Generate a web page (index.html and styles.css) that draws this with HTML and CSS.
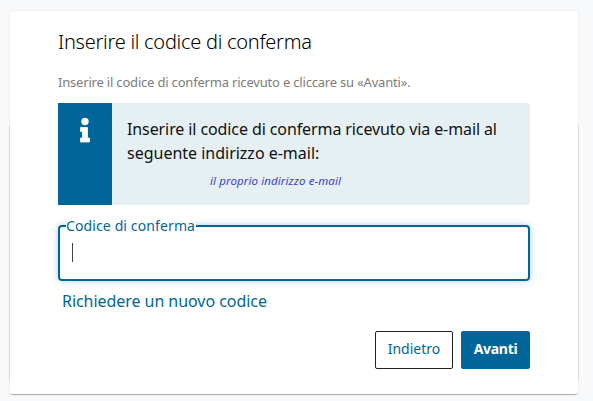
FILE: index.html
```html
<!DOCTYPE html>
<html lang="it">
<head>
<meta charset="utf-8">
<title>Inserire il codice di conferma</title>
<link rel="stylesheet" href="styles.css">
</head>
<body>
<main class="card">
  <h1 class="title"><span>Inserire il codice di conferma</span></h1>
  <p class="lead"><span>Inserire il codice di conferma ricevuto e cliccare su «Avanti».</span></p>
  <section class="notice">
    <div class="notice-icon">
      <svg width="12" height="26" viewBox="0 0 12 26"><circle cx="6" cy="4.500" r="3.700" fill="#fff"/><path d="M1.500 10.500h7v10.500h2v4h-9v-4h2v-6.500h-2z" fill="#fff" stroke="#fff" stroke-width=".8" stroke-linejoin="round"/></svg>
    </div>
    <div class="notice-body">
      <p class="message"><span class="line-one">Inserire il codice di conferma ricevuto via e-mail al</span><br><span class="line-two">seguente indirizzo e-mail:</span></p>
      <p class="address">il proprio indirizzo e-mail</p>
    </div>
  </section>
  <form class="form">
    <div class="field">
      <label class="label">Codice di conferma</label>
      <span class="caret"></span>
    </div>
    <a class="link">Richiedere un nuovo codice</a>
    <div class="actions">
      <button type="button" class="btn">Indietro</button>
      <button type="button" class="btn primary">Avanti</button>
    </div>
  </form>
</main>
</body>
</html>
```
FILE: styles.css
```css
* { box-sizing: border-box; }
body {
  margin: 0;
  padding: 11px 15px 6px 10px;
  height: 401px;
  background: #f7f9fb;
  font-family: "Noto Sans", "Open Sans", sans-serif;
  overflow: hidden;
}
.card {
  position: relative;
  height: 384px;
  padding: 17px 48px 0;
  background: #fff;
  border-radius: 3px;
  box-shadow: 0 0 3px rgba(0, 0, 0, .08);
  border-bottom: 1px solid #adadad;
}
.card::before {
  content: "";
  position: absolute;
  inset: 115px -1px 14px;
  border: solid #d8dadc;
  border-width: 0 1px;
}
.title {
  margin: 0;
  font-size: 20px;
  line-height: 27px;
  font-weight: 300;
  letter-spacing: -.27px;
  color: #000;
  white-space: nowrap;
}
.lead {
  margin: 17px 0 0;
  font-size: 13px;
  line-height: 20px;
  font-weight: 400;
  letter-spacing: -.19px;
  color: #7c7c7c;
  white-space: nowrap;
}
.notice {
  display: flex;
  height: 102px;
  margin-top: 11px;
  background: #e5eff4;
  border-radius: 0 4px 4px 0;
  overflow: hidden;
}
.notice-icon {
  width: 54px;
  padding: 14px 0 0 21px;
  background: #069;
}
.notice-body { padding: 14px 0 0 15px; white-space: nowrap; }
.message { margin: 0; font-size: 16px; line-height: 24px; color: #111; }
.line-one { letter-spacing: -.1px; }
.line-two { letter-spacing: -.01px; }
.address {
  margin: 8px 0 0 83px;
  font-size: 11.5px;
  line-height: 16px;
  font-style: italic;
  letter-spacing: .1px;
  color: #4040cc;
}
.field {
  position: relative;
  height: 56px;
  margin-top: 20px;
  padding: 16px 12px;
  border: 2px solid #069;
  border-radius: 4px;
  box-shadow: 0 0 6px rgba(0, 120, 220, .35);
}
.label {
  position: absolute;
  left: 6px;
  top: -10px;
  width: 130px;
  height: 18px;
  font-size: 14px;
  line-height: 18px;
  letter-spacing: .12px;
  background: #fff;
  color: #069;
  white-space: nowrap;
}
.caret { display: block; width: 1px; height: 19px; background: #444; }
.link {
  display: block;
  margin: 8px 0 0 4px;
  font-size: 16px;
  line-height: 24px;
  letter-spacing: -.05px;
  color: #069;
}
.actions { display: flex; justify-content: flex-end; gap: 8px; margin-top: 18px; }
.btn {
  width: 78px;
  height: 38px;
  padding: 0 0 2px;
  border: 1px solid #222;
  border-radius: 2px;
  background: #fff;
  color: #069;
  font: 14px/20px "Noto Sans", sans-serif;
}
.primary { width: 69px; border-color: #069; background: #069; color: #fff; font-weight: 700; letter-spacing: -.3px; }
```
